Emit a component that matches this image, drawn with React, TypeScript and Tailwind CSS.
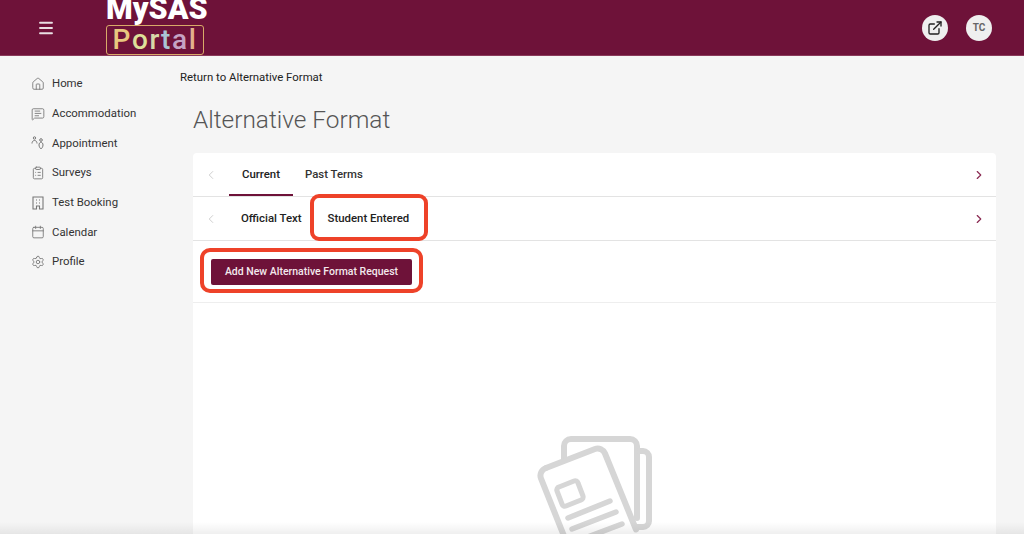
import React from "react";
import {
  Calendar,
  ChevronLeft,
  ChevronRight,
  ClipboardList,
  ExternalLink,
  Home,
  Menu,
  MessageSquareText,
  Settings,
} from "lucide-react";

const maroon = "bg-[#6e1239]";

function PeopleIcon() {
  return (
    <svg viewBox="0 0 14 14" className="h-[14px] w-[14px]" fill="none" stroke="#777" strokeWidth="1">
      <circle cx="3.5" cy="2" r="1.2" />
      <path d="M1 7.5c0-1.8 1-3 2.5-3S6 5.700 6 7.500" />
      <circle cx="10" cy="4" r="1.300" />
      <path d="M8 9c0-1.500.8-2.800 2-2.800s2 1.300 2 2.800-1 3.500-2 3.800C9 12.500 8 10.500 8 9z" />
    </svg>
  );
}

function BookingIcon() {
  return (
    <svg viewBox="0 0 14 14" className="h-[14px] w-[14px]" fill="none" stroke="#777" strokeWidth="1.100">
      <path d="M2 1h10v12H8.500v-3h-3v3H2z" />
      <path d="M5 4h1M8 4h1M5 7h1M8 7h1" />
    </svg>
  );
}

const navItems = [
  { label: "Home", icon: <Home size={14} color="#777" strokeWidth={1.500} /> },
  { label: "Accommodation", icon: <MessageSquareText size={14} color="#777" strokeWidth={1.500} /> },
  { label: "Appointment", icon: <PeopleIcon /> },
  { label: "Surveys", icon: <ClipboardList size={14} color="#777" strokeWidth={1.500} /> },
  { label: "Test Booking", icon: <BookingIcon /> },
  { label: "Calendar", icon: <Calendar size={14} color="#777" strokeWidth={1.500} /> },
  { label: "Profile", icon: <Settings size={14} color="#777" strokeWidth={1.500} /> },
];

function Logo() {
  return (
    <div className="flex h-[56px] w-[98px] flex-col items-stretch">
      <div className="-mt-[7px] h-[32px] whitespace-nowrap text-center text-[30.500px] leading-[32px] font-black text-white">
        MySAS
      </div>
      <div className="flex h-[30px] items-center justify-center rounded-[3px] border-[1.500px] border-[#d9a968] text-[28px] leading-[28px] font-medium tracking-[1.600px]">
        <span className="text-[#e8c77f]">P</span>
        <span className="text-[#dfe09a]">o</span>
        <span className="text-[#d8d8a8]">r</span>
        <span className="text-[#a9c4d4]">t</span>
        <span className="text-[#c5a3c4]">a</span>
        <span className="text-[#e3b08c]">l</span>
      </div>
    </div>
  );
}

function Header() {
  return (
    <header className={`flex h-[56px] shrink-0 items-center overflow-hidden ${maroon} border-b border-[#8a3a5a]`}>
      <div className="ml-[37px] w-[69px]">
        <Menu size={18} color="#e9dfe3" strokeWidth={2.500} />
      </div>
      <Logo />
      <div className="ml-auto mr-[32px] flex items-center gap-[18px]">
        <div className="flex h-[26px] w-[26px] items-center justify-center rounded-full bg-[#efefef]">
          <ExternalLink size={16} color="#222" strokeWidth={2} />
        </div>
        <div className="flex h-[26px] w-[26px] items-center justify-center rounded-full bg-[#efefef] text-[10px] font-bold text-[#666]">
          TC
        </div>
      </div>
    </header>
  );
}

function Sidebar() {
  return (
    <nav className="flex w-[180px] shrink-0 flex-col pl-[31px] pt-[13px]">
      {navItems.map((item) => (
        <div key={item.label} className="flex h-[29.700px] items-center gap-[7px] text-[11.400px] text-[#333]">
          <span className="flex w-[14px] justify-center">{item.icon}</span>
          <span>{item.label}</span>
        </div>
      ))}
    </nav>
  );
}

function TabRow({ children }: { children: React.ReactNode }) {
  return (
    <div className="flex h-[44px] items-stretch border-b border-[#e3e3e3]">
      <div className="flex w-[36px] items-center justify-center">
        <ChevronLeft size={14} color="#c8c8c8" strokeWidth={1.500} />
      </div>
      {children}
      <div className="ml-auto flex w-[36px] items-center justify-center pl-[2px]">
        <ChevronRight size={14} color="#8a2a52" strokeWidth={2} />
      </div>
    </div>
  );
}

function EmptyIcon() {
  return (
    <svg viewBox="530 430 130 104" className="mx-auto mt-[128px] h-[104px] w-[130px]" fill="none" stroke="#d6d6d6" strokeWidth="6" strokeLinecap="round" strokeLinejoin="round">
      <path d="M564 459V445a7 7 0 0 1 7-7h59a7 7 0 0 1 7 7v72" />
      <path d="M640 450h3a6 6 0 0 1 6 6v64a6 6 0 0 1-6 6h-6" />
      <path d="M546 467l49-19a8 8 0 0 1 10 4.500l31 76" />
      <path d="M546 467a8 8 0 0 0-5 10.500l24 60" />
      <path d="M559 486l15-6a3 3 0 0 1 4 2l5 13a3 3 0 0 1-2 4l-15 6a3 3 0 0 1-4-2l-5-13a3 3 0 0 1 2-4z" strokeWidth="5" />
      <path d="M568 517l42-17M572 528l44-17M585 537l37-14" strokeWidth="5.500" />
    </svg>
  );
}

export default function App() {
  return (
    <div className="relative flex h-[534px] w-[1024px] flex-col overflow-hidden bg-[#f5f5f5] font-['Roboto',sans-serif]">
      <Header />
      <div className="flex min-h-0 flex-1">
        <Sidebar />
        <main className="min-w-0 flex-1">
          <div className="pt-[14px] text-[11.400px] leading-[14px] text-[#222]">Return to Alternative Format</div>
          <h1 className="ml-[13px] mt-[20px] text-[24.400px] leading-[32px] font-light text-[#555]">Alternative Format</h1>
          <section className="ml-[13px] mt-[17px] h-[500px] w-[803px] rounded-t-[4px] bg-white">
            <TabRow>
              <div className="relative flex w-[64px] items-center justify-center text-[11.400px] font-medium text-[#222]">
                Current
                <span className={`absolute inset-x-0 bottom-0 h-[2px] ${maroon}`} />
              </div>
              <div className="ml-[12px] flex items-center text-[11.400px] font-medium text-[#333]">Past Terms</div>
            </TabRow>
            <TabRow>
              <div className="ml-[12px] flex items-center text-[11.400px] font-medium text-[#222]">Official Text</div>
              <div className="ml-[26px] flex items-center text-[11.400px] font-medium text-[#222]">Student Entered</div>
            </TabRow>
            <div className="flex h-[62px] items-start border-b border-[#eeeeee] pl-[18px] pt-[18px]">
              <button className={`h-[26px] w-[201px] rounded-[2px] ${maroon} text-[10.500px] font-medium text-[#f3e9ed]`}>
                Add New Alternative Format Request
              </button>
            </div>
            <EmptyIcon />
          </section>
        </main>
      </div>
      {/* red annotation outlines */}
      <div className="absolute left-[310px] top-[194px] h-[47px] w-[118px] rounded-[9px] border-[4px] border-[#ee4229]" />
      <div className="absolute left-[200px] top-[248px] h-[45px] w-[223px] rounded-[10px] border-[4px] border-[#ee4229]" />
      <div className="absolute inset-x-0 bottom-0 h-[12px] bg-gradient-to-b from-transparent to-[#00000010]" />
    </div>
  );
}
